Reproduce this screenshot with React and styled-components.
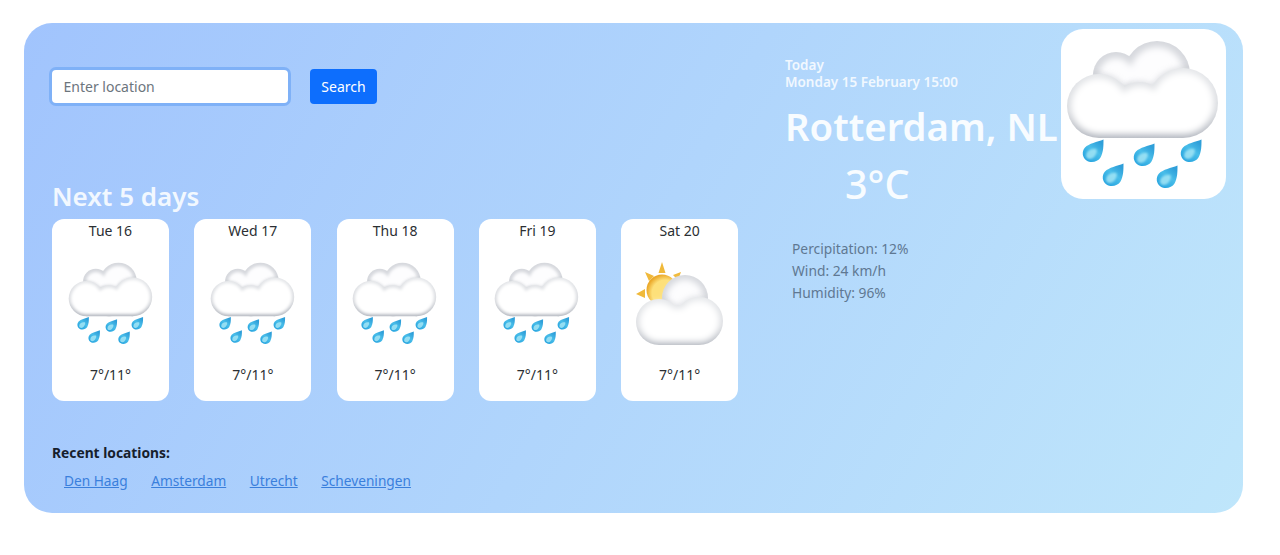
import React from 'react';
import styled, { createGlobalStyle } from 'styled-components';

const GlobalStyle = createGlobalStyle`
  body {
    margin: 0;
    background: #fff;
    font-family: "Noto Sans", "Open Sans", sans-serif;
    color: #212529;
  }
`;

const Panel = styled.main`
  display: flex;
  box-sizing: border-box;
  width: 1219px;
  height: 490px;
  margin: 23px 0 0 24px;
  padding-left: 28px;
  border-radius: 28px;
  background: linear-gradient(120deg, #a1c4fd 0%, #bfe6fb 100%);
`;

const LeftColumn = styled.section`
  width: 733px;
  padding-top: 46px;
`;

const SearchRow = styled.form`
  display: flex;
  align-items: center;
  gap: 22px;
  height: 35px;
`;

const SearchInput = styled.input`
  box-sizing: border-box;
  width: 236px;
  height: 33px;
  padding: 0 11.5px;
  border: 0;
  border-radius: 4px;
  outline: 0;
  background: #fff;
  box-shadow: 0 0 0 3px #7fb1f7;
  font: 14px "Noto Sans", sans-serif;
  color: #212529;
  &::placeholder {
    color: #6c757d;
    opacity: 1;
  }
`;

const SearchButton = styled.button`
  width: 67px;
  height: 35px;
  padding: 0;
  border: 0;
  border-radius: 4px;
  background: #0d6efd;
  color: #fff;
  font: 14px "Noto Sans", sans-serif;
`;

const SectionTitle = styled.h2`
  margin: 75px 0 0;
  font-size: 26px;
  line-height: 34px;
  font-weight: 600;
  color: #f2f8ff;
`;

const CardRow = styled.div`
  display: flex;
  gap: 25.3px;
  margin-top: 6px;
`;

const Card = styled.article`
  display: flex;
  flex-direction: column;
  align-items: center;
  box-sizing: border-box;
  width: 117px;
  height: 182px;
  border-radius: 12px;
  background: #fff;
  font-size: 14px;
  line-height: 24px;
  color: #2b2f33;
`;

const CardIcon = styled.svg`
  display: block;
  width: 92px;
  height: 94px;
  margin: 13px 0 13px;
`;

const RecentTitle = styled.h3`
  margin: 41px 0 0;
  font-size: 13.8px;
  line-height: 22px;
  font-weight: 700;
  color: #16202c;
`;

const RecentLinks = styled.nav`
  display: flex;
  gap: 23.5px;
  margin-top: 6px;
  padding-left: 12px;
`;

const RecentLink = styled.a`
  font-size: 13.7px;
  line-height: 22px;
  color: #3a7fdc;
  text-decoration: underline;
`;

const RightColumn = styled.section`
  display: flex;
  align-items: flex-start;
`;

const Info = styled.div`
  width: 276px;
  padding-top: 34px;
`;

const TodayLine = styled.div`
  font-size: 13.5px;
  line-height: 17px;
  font-weight: 600;
  color: #f1f8ff;
`;

const City = styled.h1`
  margin: 8px 0 0;
  font-size: 38.3px;
  line-height: 54px;
  font-weight: 600;
  white-space: nowrap;
  color: #f8fcff;
`;

const Temperature = styled.div`
  margin-top: 3px;
  padding-left: 60px;
  font-size: 39.5px;
  line-height: 56px;
  font-weight: 500;
  color: #f8fcff;
`;

const Details = styled.ul`
  margin: 26px 0 0;
  padding: 0 0 0 7px;
  list-style: none;
  font-size: 13.8px;
  line-height: 22px;
  color: #5f7892;
`;

const CurrentTile = styled.div`
  width: 165px;
  height: 170px;
  margin-top: 6px;
  border-radius: 22px;
  background: #fff;
`;

const TileIcon = styled.svg`
  display: block;
  width: 100%;
  height: 100%;
`;

const IconDefs = () => (
  <defs>
    <filter id="cloudBlur" x="-20%" y="-20%" width="140%" height="140%">
      <feGaussianBlur stdDeviation="3" />
    </filter>
    <filter id="softBlur" x="-30%" y="-30%" width="160%" height="160%">
      <feGaussianBlur stdDeviation="1.2" />
    </filter>
    <linearGradient id="rainEdge" gradientUnits="userSpaceOnUse" x1="0" y1="42" x2="0" y2="109">
      <stop offset="0" stopColor="#e4e6e9" />
      <stop offset="0.6" stopColor="#d8dade" />
      <stop offset="1" stopColor="#b4b8c0" />
    </linearGradient>
    <linearGradient id="sunEdge" gradientUnits="userSpaceOnUse" x1="0" y1="43" x2="0" y2="89">
      <stop offset="0" stopColor="#e4e6e9" />
      <stop offset="0.6" stopColor="#d8dade" />
      <stop offset="1" stopColor="#b4b8c0" />
    </linearGradient>
    <linearGradient id="dropFill" x1="0.2" y1="0.9" x2="0.8" y2="0.1">
      <stop offset="0" stopColor="#2aa6e0" />
      <stop offset="0.55" stopColor="#48bde9" />
      <stop offset="1" stopColor="#2f9fd9" />
    </linearGradient>
    <radialGradient id="sunFill" cx="0.6" cy="0.6" r="0.6">
      <stop offset="0.7" stopColor="#fde07a" />
      <stop offset="1" stopColor="#eba92a" />
    </radialGradient>
  </defs>
);

// a cloud is a set of circles plus a rect that fills its flat bottom
const CloudShape = ({ circles, base, fill, inset = 0, ...rest }) => (
  <g fill={fill} {...rest}>
    {circles.map(([cx, cy, r]) => (
      <circle key={`${cx}-${cy}`} cx={cx} cy={cy} r={r - inset} />
    ))}
    <rect
      x={base[0]}
      y={base[1]}
      width={base[2]}
      height={base[3] - inset}
    />
  </g>
);

const NO_BASE = [0, 0, 0, 0];

const Cloud = ({ back, front, base, inset, edge }) => (
  <>
    <clipPath id={`${edge}Back`}>
      {back.map(([cx, cy, r]) => (
        <circle key={cx} cx={cx} cy={cy} r={r} />
      ))}
    </clipPath>
    <CloudShape circles={back} base={NO_BASE} fill="#d6d8dd" />
    <CloudShape
      circles={back}
      base={NO_BASE}
      fill="#fdfdfe"
      inset={inset * 1.5}
      filter="url(#cloudBlur)"
    />
    {/* shadow of the front cloud, only where it falls on the back one */}
    <g clipPath={`url(#${edge}Back)`}>
      <CloudShape
        circles={front}
        base={base}
        fill="#a9adb6"
        opacity="0.5"
        filter="url(#cloudBlur)"
      />
    </g>
    <CloudShape circles={front} base={base} fill={`url(#${edge})`} />
    <CloudShape
      circles={front}
      base={base}
      fill="#ffffff"
      inset={inset}
      filter="url(#cloudBlur)"
    />
  </>
);

const DROPS = [
  [31, 124],
  [51, 148],
  [82, 128],
  [105, 150],
  [129, 124],
];

const RainIcon = () => (
  <>
    <IconDefs />
    <Cloud
      back={[
        [55, 46, 23],
        [96, 45, 33],
      ]}
      front={[
        [38, 77, 32],
        [79, 81, 28],
        [122, 74, 35],
      ]}
      base={[38, 85, 84, 24]}
      inset={4}
      edge="rainEdge"
    />
    {DROPS.map(([x, y]) => (
      <g key={x} transform={`translate(${x} ${y})`}>
        <path
          d="M11.500-13.500C11.500-7 11.500-1 8.500 4.500 5.800 9-1 10.500-5.500 7.500-9.800 4.500-10.500-1.500-7-5.500-3-9.500 5-11 11.500-13.500Z"
          fill="url(#dropFill)"
        />
        <path
          d="M-6 3C-6-2-1-5 4-4 6-3 4 3 1 5-2 7-5.500 6-6 3Z"
          fill="#a9e8f6"
          opacity="0.8"
          filter="url(#softBlur)"
        />
      </g>
    ))}
  </>
);

const SunCloudIcon = () => (
  <>
    <IconDefs />
    <g fill="#f0b93a">
      <path d="M28 6l3.500 11h-7zM11 16l9 4-5 5zM47 16l-3 8-5-5zM2 38l9-5v9z" />
    </g>
    <circle cx="28" cy="34" r="15.500" fill="url(#sunFill)" />
    <Cloud
      back={[[51, 42, 23]]}
      front={[
        [25, 66, 23],
        [45, 69, 20],
        [65, 65, 24],
      ]}
      base={[25, 70, 40, 19]}
      inset={3}
      edge="sunEdge"
    />
  </>
);

const forecast = [
  { day: 'Tue 16', kind: 'rain' },
  { day: 'Wed 17', kind: 'rain' },
  { day: 'Thu 18', kind: 'rain' },
  { day: 'Fri 19', kind: 'rain' },
  { day: 'Sat 20', kind: 'sun' },
];

const recent = ['Den Haag', 'Amsterdam', 'Utrecht', 'Scheveningen'];

const App = () => (
  <>
    <GlobalStyle />
    <Panel>
      <LeftColumn>
        <SearchRow onSubmit={(e) => e.preventDefault()}>
          <SearchInput placeholder="Enter location" />
          <SearchButton>Search</SearchButton>
        </SearchRow>
        <SectionTitle>Next 5 days</SectionTitle>
        <CardRow>
          {forecast.map((item) => (
            <Card key={item.day}>
              <div>{item.day}</div>
              {item.kind === 'rain' ? (
                <CardIcon viewBox="0 0 165 170">
                  <RainIcon />
                </CardIcon>
              ) : (
                <CardIcon viewBox="0 0 92 94">
                  <SunCloudIcon />
                </CardIcon>
              )}
              <div>7°/11°</div>
            </Card>
          ))}
        </CardRow>
        <RecentTitle>Recent locations:</RecentTitle>
        <RecentLinks>
          {recent.map((place) => (
            <RecentLink href="#" key={place}>
              {place}
            </RecentLink>
          ))}
        </RecentLinks>
      </LeftColumn>
      <RightColumn>
        <Info>
          <TodayLine>Today</TodayLine>
          <TodayLine>Monday 15 February 15:00</TodayLine>
          <City>Rotterdam, NL</City>
          <Temperature>3°C</Temperature>
          <Details>
            <li>Percipitation: 12%</li>
            <li>Wind: 24 km/h</li>
            <li>Humidity: 96%</li>
          </Details>
        </Info>
        <CurrentTile>
          <TileIcon viewBox="0 0 165 170">
            <RainIcon />
          </TileIcon>
        </CurrentTile>
      </RightColumn>
    </Panel>
  </>
);

export default App;
